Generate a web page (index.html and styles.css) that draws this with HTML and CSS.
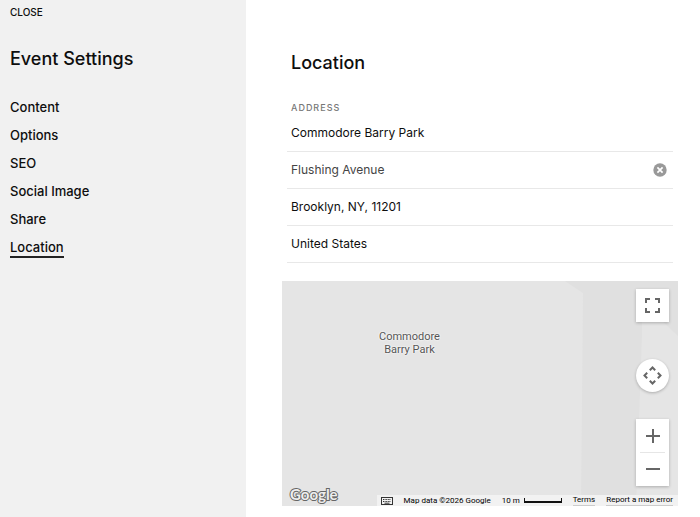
FILE: index.html
```
<!DOCTYPE html>
<html lang="en">
<head>
  <meta charset="UTF-8">
  <meta name="viewport" content="width=device-width, initial-scale=1.0">
  <title>Event Settings</title>
  <link rel="stylesheet" href="styles.css">
</head>
<body>

<div class="layout">
  <!-- Sidebar -->
  <aside class="sidebar">
    <button type="button" class="close">CLOSE</button>
    <h1>Event Settings</h1>
    <nav>
      <a href="#content">Content</a>
      <a href="#options">Options</a>
      <a href="#seo">SEO</a>
      <a href="#social">Social Image</a>
      <a href="#share">Share</a>
      <a href="#location" class="active">Location</a>
    </nav>
  </aside>

  <!-- Location Panel -->
  <main class="panel" id="location">
    <h2>Location</h2>
    <form class="address">
      <label for="venue">ADDRESS</label>
      <div class="field">
        <input type="text" id="venue" value="Commodore Barry Park">
      </div>
      <div class="field muted">
        <input type="text" aria-label="Street" value="Flushing Avenue">
        <button type="button" class="clear" aria-label="Clear street">
          <svg width="14" height="14" viewBox="0 0 14 14">
            <circle cx="7" cy="7" r="6.7" fill="#999"/>
            <path d="M4.4 4.4l5.2 5.2M9.6 4.4l-5.2 5.2" stroke="#fff" stroke-width="1.7"/>
          </svg>
        </button>
      </div>
      <div class="field">
        <input type="text" aria-label="City, state, zip" value="Brooklyn, NY, 11201">
      </div>
      <div class="field">
        <input type="text" aria-label="Country" value="United States">
      </div>
    </form>

    <!-- Map -->
    <div class="map">
      <svg class="map-tiles" viewBox="0 0 396 225" preserveAspectRatio="none">
        <path d="M283 0l18 12l-2 213h55l6-172V0z" fill="#e0e0e0"/>
        <path d="M360 0h36v55l-36-35z" fill="#e0e0e0"/>
      </svg>
      <p class="place">Commodore<br>Barry Park</p>

      <div class="controls">
        <button type="button" class="fullscreen" aria-label="Toggle fullscreen">
          <svg width="15" height="15" viewBox="0 0 15 15" fill="none" stroke="#666" stroke-width="2">
            <path d="M1 5V1h4M10 1h4v4M14 10v4h-4M5 14H1v-4"/>
          </svg>
        </button>
        <button type="button" class="camera" aria-label="Map camera controls">
          <svg width="19" height="19" viewBox="0 0 19 19" fill="none" stroke="#666" stroke-width="2">
            <path d="M6.8 4.2L9.5 1.5l2.7 2.7M6.8 14.8l2.7 2.7l2.7-2.7M4.2 6.8L1.5 9.5l2.7 2.7M14.8 6.8l2.7 2.7l-2.7 2.7"/>
          </svg>
        </button>
        <div class="zoom">
          <button type="button" aria-label="Zoom in">
            <svg width="14" height="14" viewBox="0 0 14 14" stroke="#666" stroke-width="2">
              <path d="M0 7h14M7 0v14"/>
            </svg>
          </button>
          <button type="button" aria-label="Zoom out">
            <svg width="14" height="14" viewBox="0 0 14 14" stroke="#666" stroke-width="2">
              <path d="M0 7h14"/>
            </svg>
          </button>
        </div>
      </div>

      <a href="#map" class="logo">Google</a>

      <div class="attribution">
        <button type="button" class="keyboard" aria-label="Keyboard shortcuts">
          <svg width="12" height="8" viewBox="0 0 12 8">
            <rect x=".5" y=".5" width="11" height="7" fill="none" stroke="#333"/>
            <path d="M2 2.5h8M2 4.5h8" stroke="#333" stroke-dasharray="1 .6"/>
            <path d="M3.5 6.2h5" stroke="#333"/>
          </svg>
        </button>
        <span>Map data ©2026 Google</span>
        <span class="scale">10 m <i class="bar"></i></span>
        <a href="#terms">Terms</a>
        <a href="#report">Report a map error</a>
      </div>
    </div>
  </main>
</div>

</body>
</html>
```

FILE: styles.css
```
/* Basic Styles */
* {
  box-sizing: border-box;
}
body {
  margin: 0;
  font-family: Inter, "Liberation Sans", sans-serif;
  color: #0e0e0e;
  background-color: #fff;
}
button {
  display: flex;
  align-items: center;
  justify-content: center;
  padding: 0;
  border: none;
  background: none;
  color: inherit;
  font-family: inherit;
  cursor: pointer;
}
svg {
  display: block;
}
h1, h2 {
  margin: 0;
  font-size: 18px;
  line-height: 24px;
  font-weight: 500;
}
.layout {
  display: flex;
  min-height: 100vh;
}

/* Sidebar */
.sidebar {
  flex: 0 0 246px;
  padding: 5px 10px;
  background-color: #f1f1f1;
}
.close {
  font-size: 10px;
  line-height: 14px;
  font-weight: 500;
}
.sidebar h1 {
  margin-top: 28px;
}
nav {
  display: flex;
  flex-direction: column;
  align-items: flex-start;
  gap: 8px;
  margin-top: 26px;
}
nav a {
  font-size: 13px;
  line-height: 20px;
  font-weight: 500;
  color: inherit;
  text-decoration: none;
}
nav .active {
  box-shadow: 0 1px #222, inset 0 -1px #222;
}

/* Location Panel */
.panel {
  flex: 1;
  display: flex;
  flex-direction: column;
  padding: 51px 22px 11px 36px;
}
.panel h2 {
  padding-left: 9px;
}
.address {
  margin: 26px 5px 18px;
}
.address label {
  display: block;
  padding-left: 4px;
  font-size: 9px;
  line-height: 14px;
  font-weight: 500;
  letter-spacing: 1px;
  color: #777;
}
.field {
  display: flex;
  align-items: center;
  height: 37px;
  padding: 0 6px 0 4px;
  border-bottom: 1px solid #e8e8e8;
}
.field input {
  flex: 1;
  min-width: 0;
  padding: 0;
  border: none;
  outline: none;
  background: none;
  font-family: inherit;
  font-size: 12px;
  line-height: 16px;
  color: #0e0e0e;
}
.muted input {
  color: #444;
}

/* Map */
.map {
  position: relative;
  flex: 1;
  min-height: 225px;
  overflow: hidden;
  background-color: #e5e5e5;
  font-family: Roboto, sans-serif;
}
.map-tiles {
  position: absolute;
  width: 100%;
  height: 100%;
}
.place {
  position: absolute;
  top: 49px;
  left: 97px;
  margin: 0;
  font-size: 11px;
  line-height: 13px;
  text-align: center;
  color: #555;
  text-shadow: 0 0 2px #fff, 0 0 2px #fff;
}
.controls {
  position: absolute;
  top: 8px;
  right: 9px;
  bottom: 20px;
  display: flex;
  flex-direction: column;
  width: 33px;
}
.controls button {
  width: 33px;
  height: 33px;
}
.fullscreen, .camera, .zoom {
  box-shadow: 0 1px 3px rgba(0, 0, 0, 0.25);
  background-color: #fff;
}
.camera {
  margin-top: auto;
  border-radius: 50%;
}
.zoom {
  margin-top: 27px;
}
.zoom button + button {
  height: 34px;
  background: linear-gradient(#e6e6e6, #e6e6e6) center top / 25px 1px no-repeat;
}
.logo {
  position: absolute;
  left: 8px;
  bottom: 2px;
  font-family: Lato, sans-serif;
  font-size: 15px;
  line-height: 20px;
  font-weight: 700;
  color: #eee;
  text-decoration: none;
  -webkit-text-stroke: 2px #666;
  paint-order: stroke fill;
}
.attribution {
  position: absolute;
  right: 0;
  bottom: 0;
  display: flex;
  align-items: center;
  gap: 11px;
  height: 11px;
  padding: 0 5px 0 4px;
  background-color: #f2f2f2;
  font-size: 8px;
  line-height: 10px;
  color: #000;
  white-space: nowrap;
}
.attribution a {
  color: inherit;
  text-decoration: none;
  border-bottom: 1px solid #ccc;
}
.scale {
  display: flex;
  align-items: center;
  gap: 4px;
}
.bar {
  width: 38px;
  height: 5px;
  border: 2px solid #111;
  border-width: 0 1px 2px;
}
```
